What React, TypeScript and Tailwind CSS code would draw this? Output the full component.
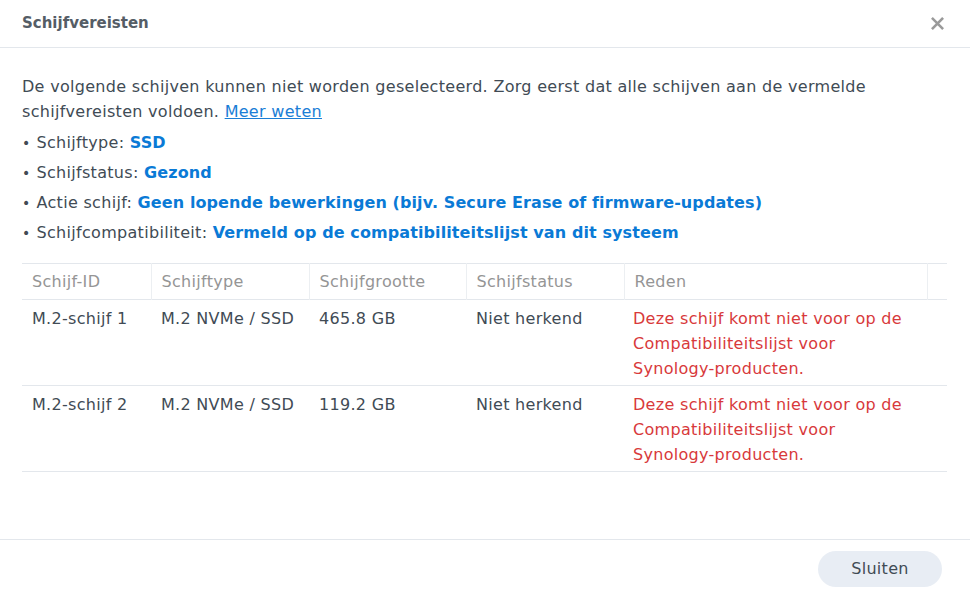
const rows = [
  { id: 'M.2-schijf 1', type: 'M.2 NVMe / SSD', size: '465.8 GB', status: 'Niet herkend' },
  { id: 'M.2-schijf 2', type: 'M.2 NVMe / SSD', size: '119.2 GB', status: 'Niet herkend' },
];

const requirements = [
  { label: 'Schijftype:', value: 'SSD' },
  { label: 'Schijfstatus:', value: 'Gezond' },
  { label: 'Actie schijf:', value: 'Geen lopende bewerkingen (bijv. Secure Erase of firmware-updates)' },
  { label: 'Schijfcompatibiliteit:', value: 'Vermeld op de compatibiliteitslijst van dit systeem' },
];

export default function App() {
  return (
    <div
      className="w-[970px] h-[592px] bg-white flex flex-col text-[#414b55] overflow-hidden tracking-[0.3px]"
      style={{ fontFamily: '"DejaVu Sans", Verdana, sans-serif' }}
    >
      {/* header */}
      <div className="h-[48px] shrink-0 flex items-center justify-between pl-[22px] pr-[26px] border-b border-[#e3e7ec]">
        <span className="text-[15px] font-bold text-[#555d66] tracking-normal">Schijfvereisten</span>
        <svg width="13" height="13" viewBox="0 0 14 14" className="text-[#9a9a9a]">
          <path d="M2 2 L12 12 M12 2 L2 12" stroke="currentColor" strokeWidth="2.8" strokeLinecap="square" />
        </svg>
      </div>

      {/* body */}
      <div className="flex-1 pl-[22px] pr-[23px] pt-[26px] text-[16px]">
        <p className="leading-[25px]">
          De volgende schijven kunnen niet worden geselecteerd. Zorg eerst dat alle schijven aan de vermelde
          <br />
          schijfvereisten voldoen.{' '}
          <a href="#" className="text-[#1a7ed6] underline">Meer weten</a>
        </p>
        <ul className="mt-[4px]">
          {requirements.map((r) => (
            <li key={r.label} className="h-[30px] flex items-center gap-[6px]">
              <span className="text-[14px]">•</span>
              <span>
                {r.label} <span className="font-bold text-[#0a7ad6] tracking-[0.1px]">{r.value}</span>
              </span>
            </li>
          ))}
        </ul>

        <table className="mt-[15px] w-full border-collapse table-fixed">
          <colgroup>
            <col className="w-[129px]" />
            <col className="w-[158px]" />
            <col className="w-[157px]" />
            <col className="w-[158px]" />
            <col className="w-[303px]" />
            <col />
          </colgroup>
          <thead>
            <tr className="h-[36px] border-y border-[#e3e7ec] text-[#959595]">
              {['Schijf-ID', 'Schijftype', 'Schijfgrootte', 'Schijfstatus', 'Reden', ''].map((h, i) => (
                <th
                  key={i}
                  className={`font-normal text-left px-[10px] ${i < 5 ? 'border-r border-[#eceff2]' : ''}`}
                >
                  {h}
                </th>
              ))}
            </tr>
          </thead>
          <tbody>
            {rows.map((r) => (
              <tr key={r.id} className="border-b border-[#e3e7ec] align-top">
                <td className="px-[10px] pt-[6px] pb-[4px] leading-[25px]">{r.id}</td>
                <td className="px-[10px] pt-[6px] leading-[25px]">{r.type}</td>
                <td className="px-[10px] pt-[6px] leading-[25px]">{r.size}</td>
                <td className="px-[10px] pt-[6px] leading-[25px]">{r.status}</td>
                <td colSpan={2} className="px-[9px] pt-[6px] pb-[4px] leading-[25px] text-[#d8393b] whitespace-nowrap">
                  Deze schijf komt niet voor op de<br />
                  Compatibiliteitslijst voor<br />
                  Synology-producten.
                </td>
              </tr>
            ))}
          </tbody>
        </table>
      </div>

      {/* footer */}
      <div className="h-[53px] shrink-0 border-t border-[#e3e7ec] flex items-start justify-end pr-[28px] pt-[11px]">
        <button className="w-[124px] h-[36px] rounded-full bg-[#e8edf4] text-[16px] text-[#414b55]">
          Sluiten
        </button>
      </div>
    </div>
  );
}
